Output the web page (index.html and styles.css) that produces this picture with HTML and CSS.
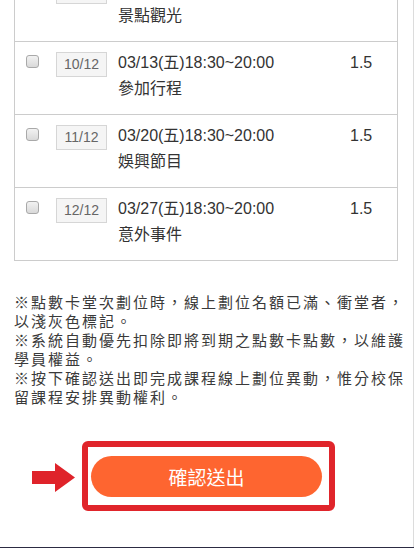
FILE: index.html
```html
<!DOCTYPE html>
<html lang="zh-tw">
<head>
    <meta charset="UTF-8">
    <meta name="viewport" content="width=device-width, initial-scale=1.0">
    <title>點數卡劃位</title>
    <link rel="stylesheet" href="styles.css">
</head>
<body>
    <div class="page">
        <div class="lesson-list">
            <div class="lesson-row">
                <input type="checkbox" class="lesson-check">
                <span class="lesson-no">9/12</span>
                <div class="lesson-info">
                    <div>03/06(五)18:30~20:00</div>
                    <div>景點觀光</div>
                </div>
                <span class="lesson-point">1.5</span>
            </div>
            <div class="lesson-row">
                <input type="checkbox" class="lesson-check">
                <span class="lesson-no">10/12</span>
                <div class="lesson-info">
                    <div>03/13(五)18:30~20:00</div>
                    <div>參加行程</div>
                </div>
                <span class="lesson-point">1.5</span>
            </div>
            <div class="lesson-row">
                <input type="checkbox" class="lesson-check">
                <span class="lesson-no">11/12</span>
                <div class="lesson-info">
                    <div>03/20(五)18:30~20:00</div>
                    <div>娛興節目</div>
                </div>
                <span class="lesson-point">1.5</span>
            </div>
            <div class="lesson-row">
                <input type="checkbox" class="lesson-check">
                <span class="lesson-no">12/12</span>
                <div class="lesson-info">
                    <div>03/27(五)18:30~20:00</div>
                    <div>意外事件</div>
                </div>
                <span class="lesson-point">1.5</span>
            </div>
        </div>

        <div class="notes">
            <p>※點數卡堂次劃位時，線上劃位名額已滿、衝堂者，以淺灰色標記。</p>
            <p>※系統自動優先扣除即將到期之點數卡點數，以維護學員權益。</p>
            <p>※按下確認送出即完成課程線上劃位異動，惟分校保留課程安排異動權利。</p>
        </div>

        <div class="submit-row">
            <div class="highlight">
                <svg class="arrow" width="43" height="29" viewBox="0 0 43 29">
                    <polygon points="0,8 23,8 23,0 43,14.5 23,29 23,21 0,21" fill="#df232a"/>
                </svg>
                <button type="button" class="btn-submit">確認送出</button>
            </div>
        </div>
    </div>
</body>
</html>
```

FILE: styles.css
```css
body {
    margin: 0;
    height: 548px;
    overflow: hidden;
    background-color: #2c2b42;
    font-family: "Liberation Sans", "Noto Sans CJK TC", sans-serif;
    color: #333;
}
.page {
    box-sizing: border-box;
    width: 414px;
    height: 547px;
    overflow: hidden;
    background: white;
    border-right: 1px solid #dcdcdc;
}
.lesson-list {
    width: 384px;
    box-sizing: border-box;
    margin: -32px 0 0 14px;
    border: 1px solid #cccccc;
}
.lesson-row {
    display: flex;
    align-items: flex-start;
    padding: 8px 0 12px;
    border-top: 1px solid #cccccc;
}
.lesson-row:first-child {
    border-top: none;
}
.lesson-check {
    appearance: none;
    -webkit-appearance: none;
    box-sizing: border-box;
    width: 13px;
    height: 13px;
    margin: 5px 0 0 11px;
    border: 1px solid #a9a9a9;
    border-radius: 3px;
    background: linear-gradient(#f2f2f2, #d9d9d9);
}
.lesson-no {
    box-sizing: border-box;
    width: 51px;
    height: 25px;
    margin: 2px 0 0 17px;
    border: 1px solid #d6d6d6;
    background-color: #f5f5f5;
    color: #666;
    font-size: 14px;
    line-height: 23px;
    text-align: center;
}
.lesson-info {
    width: 232px;
    margin-left: 11px;
    font-size: 16px;
    line-height: 26px;
}
.lesson-point {
    font-size: 16px;
    line-height: 26px;
}
.notes {
    width: 396px;
    margin: 31px 0 0 14px;
    font-family: "Noto Sans CJK TC", sans-serif;
    font-size: 15px;
    letter-spacing: 2px;
    line-height: 19px;
    color: #3a3a3a;
}
.notes p {
    margin: 0;
}
.submit-row {
    display: flex;
    padding-left: 82px;
    margin-top: 35px;
}
.highlight {
    position: relative;
    padding: 9px 7px 8px 3px;
    border: 6px solid #e0252b;
    border-radius: 6px;
}
.arrow {
    position: absolute;
    left: -56px;
    top: 16px;
}
.btn-submit {
    display: block;
    width: 231px;
    height: 41px;
    border: none;
    border-radius: 21px;
    background-color: #fe6530;
    color: white;
    font-family: "Noto Sans CJK TC", sans-serif;
    font-size: 19px;
    cursor: pointer;
}
```
